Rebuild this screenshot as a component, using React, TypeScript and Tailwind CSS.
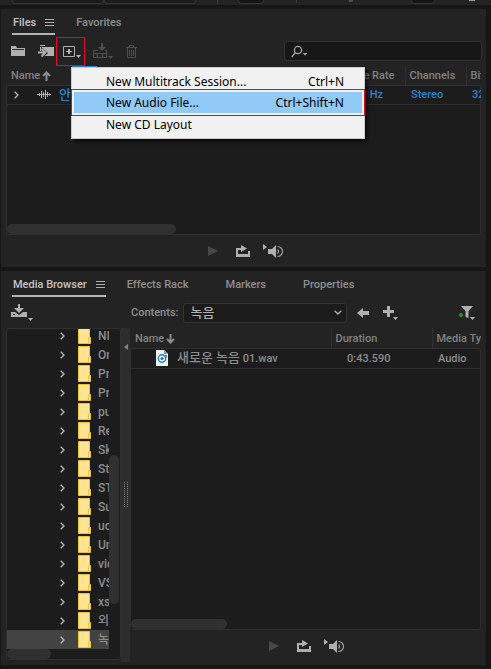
import type { ReactNode } from "react";

const folders = ["NI", "On", "Pre", "Pro", "pub", "Rec", "Sky", "Stu", "STU", "Sup", "ucl", "Uni", "vide", "VST", "xsp", "외부", "녹음"];

function MenuLines() {
  return (
    <svg className="ml-[9px]" width="9" height="8" fill="#b0b0b0" shapeRendering="crispEdges">
      <path d="M0 0h9v1H0zM0 3h9v1H0zM0 6h9v1H0z" />
    </svg>
  );
}

function Chevron() {
  return (
    <svg width="5" height="8" fill="none" stroke="#b8b8b8" strokeWidth="1.3" className="shrink-0" aria-hidden="true">
      <path d="M.7.7 4 4 .7 7.3" />
    </svg>
  );
}

function FolderIcon() {
  return (
    <svg width="13" height="17" aria-hidden="true" className="shrink-0">
      <path d="M.5.5h11v10h1v6H.5z" fill="#ffe491" stroke="#eec13b" />
      <path d="M10.5 16V11h2" fill="none" stroke="#eec13b" />
      <path d="M11.5 12v4" stroke="#fff0ac" />
    </svg>
  );
}

function SortArrow({ down = false }: { down?: boolean }) {
  return (
    <svg width="9" height="10" className="ml-[2px]" fill="none" stroke="#8c8c8c" strokeWidth="2" aria-hidden="true">
      {down ? <path d="M4.5 0v8M1 5l3.500 3.500L8 5" /> : <path d="M4.500 10V2M1 5l3.500-3.500L8 5" />}
    </svg>
  );
}

function Tab({ children, active = false }: { children: ReactNode; active?: boolean }) {
  return (
    <button
      className={
        active
          ? "flex h-[22px] items-center border-b-2 border-[#b4b4b4] px-px text-[#c4c4c4] whitespace-nowrap"
          : "flex h-[22px] items-center pb-[2px] text-[#8f8f8f] whitespace-nowrap"
      }
    >
      {children}
      {active && <MenuLines />}
    </button>
  );
}

function Transport() {
  return (
    <div className="flex items-center">
      <button aria-label="Play" className="mr-[18px]">
        <svg width="10" height="10" fill="#484848">
          <path d="M0 0v10l10-5z" />
        </svg>
      </button>
      <button aria-label="Loop playback" className="mr-[13px]">
        <svg width="14" height="12" fill="#b0b0b0">
          <path d="M0 3h5V0l6 3.500L5 7V5H2v4h10V6h2v6H0z" />
        </svg>
      </button>
      <button aria-label="Auto-play">
        <svg width="21" height="14" fill="#b0b0b0">
          <path d="M0 0v6l4-3zM5 5h4l4-4v13l-4-4H5z" />
          <path d="M14.500 5.500a2.500 2.500 0 0 1 0 4M14.500 2.500a5 5 0 0 1 0 10" fill="none" stroke="#a0a0a0" strokeWidth="1.200" />
        </svg>
      </button>
    </div>
  );
}

function ToolStrip() {
  return (
    <div className="flex h-[5px] shrink-0 items-start bg-[#232323] pl-3">
      <div className="h-1 w-[92px] rounded-b border-x border-b border-[#343434] bg-[#1b1b1b]" />
      <div className="h-1 w-[92px] rounded-b border-x border-b border-[#343434] bg-[#1b1b1b]" />
      <div className="ml-[21px] h-1 w-px bg-[#3a3a3a]" />
      <div className="ml-5 h-1 w-[26px] rounded-b border-x border-b border-[#343434] bg-[#151515]" />
      <div className="ml-8 h-[3px] w-px bg-[#3a3a3a]" />
      <div className="ml-[52px] h-0.5 w-1 bg-[#4c4c4c]" />
      <div className="ml-[58px] h-1 w-6 rounded-b border-x border-b border-[#343434] bg-[#151515]" />
      <div className="ml-[34px] h-px w-[6px] bg-[#9a9a9a]" />
    </div>
  );
}

function NewMenu() {
  return (
    <div
      role="menu"
      className="absolute top-[30px] left-[15px] z-10 flex w-[294px] flex-col border border-[#cccccc] bg-[#f1f1f1] py-[2px] font-['Noto_Sans','Noto_Sans_CJK_KR',sans-serif] text-xs font-normal text-black shadow-[3px_3px_3px_rgba(0,0,0,0.5)]"
    >
      <button role="menuitem" className="flex h-[22px] items-center justify-between pt-[2px] pr-5 pl-[34px]">
        <span>New Multitrack Session...</span>
        <span>Ctrl+N</span>
      </button>
      <button
        role="menuitem"
        className="mx-[2px] mb-px flex h-[21px] items-center justify-between bg-[#91c9f7] pt-[2px] pr-[18px] pl-8 outline-1 outline-offset-2 outline-[#e8062a]"
      >
        <span>New Audio File...</span>
        <span>Ctrl+Shift+N</span>
      </button>
      <button role="menuitem" className="flex h-[22px] items-center pl-[34px]">
        New CD Layout
      </button>
    </div>
  );
}

function FilesPanel() {
  return (
    <section className="flex h-[258px] shrink-0 flex-col bg-[#232323]">
      <div className="flex gap-[21px] pt-[4px] pl-[11px]">
        <Tab active>Files</Tab>
        <Tab>Favorites</Tab>
      </div>
      <div className="flex h-8 items-center pr-1 pl-[10px]">
        <button aria-label="Open file">
          <svg width="15" height="12" fill="#b0b0b0">
            <path d="M0 1h5l1 2h8v1H1v1H0zM0 5h1l1 1h12v5H0z" />
            <path d="M1 4h13v7H1z" />
            <path d="M1 4.500h12" stroke="#2a2a2a" />
          </svg>
        </button>
        <button aria-label="Import file" className="ml-[11px]">
          <svg width="17" height="14">
            <path d="M3 1h5v1H3zM3 3h14v9H3z" fill="#b0b0b0" />
            <path d="M0 7h4V3l7 6-7 6v-3H0z" fill="#232323" />
            <path d="M1 8.500h7M4.500 5l4 3.500-4 4" fill="none" stroke="#b0b0b0" strokeWidth="1.800" />
          </svg>
        </button>
        <div className="relative ml-[2px] h-[29px] w-[29px] border border-[#e8062a]">
          <button aria-label="New file" aria-haspopup="menu" className="flex h-full w-full items-center justify-center">
            <svg width="20" height="17" className="ml-[3px]" fill="#b8b8b8">
              <path d="M1.500 3.500h11v10h-11z" fill="none" stroke="#b0b0b0" />
              <path d="M6 6h2v2h2v1H8v2H6V9H4V8h2z" />
              <path d="M14 12h5l-2.500 3z" />
            </svg>
          </button>
          <span className="absolute top-[28px] left-[15px] h-px w-[25px] bg-[#2d7bd0]" />
          <div className="absolute top-[-1px] left-[-1px]">
            <NewMenu />
          </div>
        </div>
        <button aria-label="Insert into multitrack" className="ml-[8px]">
          <svg width="21" height="17" fill="#4e4e4e">
            <path d="M8 0h2v4h3L9 8 5 4h3z" />
            <path d="M5 7.500H.5v7h13v-7H12M.5 10.500h13M4.500 10.500v4M9.500 10.500v4" fill="none" stroke="#4e4e4e" strokeWidth="1.200" />
            <path d="M15 13h5l-2.500 3z" />
          </svg>
        </button>
        <button aria-label="Delete" className="ml-3">
          <svg width="11" height="13" fill="none" stroke="#4e4e4e">
            <path d="M0 2.500h11M3.500 2V.500h4V2M1.500 3v9.500h8V3M3.500 5v6M5.500 5v6M7.500 5v6" />
          </svg>
        </button>
        <label className="ml-auto flex h-5 w-[42%] items-center rounded-[3px] border border-[#323232] bg-[#171717] pl-[6px]">
          <svg width="17" height="13" fill="none" stroke="#a6a6a6" strokeWidth="1.300" aria-hidden="true">
            <circle cx="7" cy="5" r="3.600" />
            <path d="M4.500 7.500.700 12" />
            <path d="M11.500 8h5L14 10.500z" fill="#a6a6a6" stroke="none" />
          </svg>
          <input aria-label="Search files" className="min-w-0 flex-1 bg-transparent outline-none" />
        </label>
      </div>
      <div className="mt-[-1px] mr-[5px] ml-[5px] grid h-[169px] grid-cols-1 grid-rows-1 overflow-hidden">
        <div className="col-start-1 row-start-1 mt-[19px] rounded-[3px] border border-[#2f2f2f] bg-[#1c1c1c]" />
        <table className="col-start-1 row-start-1 w-full table-fixed self-start border-collapse">
          <colgroup>
            <col />
            <col className="w-[75px]" />
            <col className="w-[61px]" />
            <col className="w-[15px]" />
          </colgroup>
          <thead>
            <tr className="h-5 text-left text-[#828282]">
              <th className="p-0 pl-[5px] font-medium">
                <span className="flex items-center">Name<SortArrow /></span>
              </th>
              <th className="p-0 pr-[10px] text-right font-medium whitespace-nowrap">Sample Rate</th>
              <th className="border-l border-[#303030] p-0 pl-1 font-medium">Channels</th>
              <th className="overflow-hidden border-l border-[#303030] p-0 pl-1 font-medium whitespace-nowrap">Bit</th>
            </tr>
          </thead>
          <tbody>
            <tr className="h-[18px] border-b border-[#2b2b2b] text-[#2f80d0]">
              <td className="p-0 pl-2">
                <span className="flex items-center">
                  <Chevron />
                  <svg width="14" height="9" className="mr-2 ml-[18px]" stroke="#b0b0b0" aria-hidden="true">
                    <path d="M0 4.500h14M2.500 3v3M4.500 1v7M6.500 2v5M8.500 0v9M10.500 2v5M12.500 3.500v2" />
                  </svg>
                  <span className="text-[13px]">안</span>
                </span>
              </td>
              <td className="p-0 pt-px pr-[22px] text-right whitespace-nowrap">Hz</td>
              <td className="p-0 pt-px pl-[6px]">Stereo</td>
              <td className="overflow-hidden p-0 pt-px pl-[6px] whitespace-nowrap">32</td>
            </tr>
          </tbody>
        </table>
        <div className="z-0 col-start-1 row-start-1 mb-px ml-px h-[10px] w-[169px] self-end rounded-full bg-[#303030]" />
      </div>
      <div className="flex flex-1 items-center justify-center pl-[5px]">
        <Transport />
      </div>
    </section>
  );
}

function FolderTree() {
  return (
    <div className="flex h-[332px] w-[115px] shrink-0 flex-col overflow-hidden rounded-[3px] border border-[#2f2f2f] bg-[#1c1c1c]">
      <div className="flex min-h-0 flex-1 overflow-hidden">
        <ul className="mt-[-3px] w-[102px] overflow-hidden text-xs text-[#8c8c8c]">
          {folders.map((name, i) => (
            <li
              key={i}
              className={
                i === folders.length - 1
                  ? "flex h-[19px] items-center overflow-hidden bg-[#434343] pl-[53px] whitespace-nowrap"
                  : "flex h-[19px] items-center overflow-hidden pl-[53px] whitespace-nowrap"
              }
            >
              <Chevron />
              <span className="ml-[13px] flex items-center gap-[7px]">
                <FolderIcon />
                {name}
              </span>
            </li>
          ))}
        </ul>
        <div className="mt-[126px] h-[149px] w-[10px] rounded-full bg-[#303030]" />
      </div>
      <div className="h-[10px] w-11 shrink-0 rounded-full bg-[#303030]" />
    </div>
  );
}

function MediaBrowser() {
  return (
    <section className="flex flex-1 flex-col bg-[#232323]">
      <div className="flex pt-[4px] pl-[11px]">
        <div className="mr-[21px]"><Tab active>Media Browser</Tab></div>
        <div className="flex gap-[37px]">
          <Tab>Effects Rack</Tab>
          <Tab>Markers</Tab>
          <Tab>Properties</Tab>
        </div>
      </div>
      <div className="flex flex-1">
        <div className="flex w-[120px] shrink-0 flex-col pl-[5px]">
          <div className="flex h-[31px] items-center pl-[5px]">
            <button aria-label="Import from drive">
              <svg width="22" height="17" fill="#b0b0b0">
                <path d="M7 0h2v4h4L8 9 3 4h4z" />
                <path d="M0 8h4l4 3 4-3h4v5H0zM2 10v1h2v-1z" fillRule="evenodd" />
                <path d="M17 14h5l-2.500 3z" />
              </svg>
            </button>
          </div>
          <FolderTree />
        </div>
        <div className="mt-[31px] flex h-[334px] w-[9px] shrink-0 flex-col items-center bg-[#2d2d2d]">
          <svg width="4" height="6" className="mt-4" fill="#828282">
            <path d="M4 0v6L0 3z" />
          </svg>
          <div className="mt-[132px] h-[25px] w-[4px] border-x border-dotted border-[#828282]" />
        </div>
        <div className="flex min-w-0 flex-1 flex-col">
          <div className="flex h-[31px] items-center pr-[11px] pl-px text-[#8f8f8f]">
            <label htmlFor="contents" className="pt-px">Contents:</label>
            <div className="ml-[5px] grid w-[164px] grid-cols-1 items-center">
              <select
                id="contents"
                defaultValue="녹음"
                className="col-start-1 row-start-1 h-5 appearance-none rounded-[3px] border border-[#323232] bg-[#1b1b1b] pl-[6px] text-[13px] text-[#b0b0b0]"
              >
                <option>녹음</option>
              </select>
              <svg width="8" height="5" className="pointer-events-none col-start-1 row-start-1 mr-[5px] justify-self-end" fill="none" stroke="#b0b0b0" strokeWidth="1.300">
                <path d="M.700.700 4 4 7.300.700" />
              </svg>
            </div>
            <button aria-label="Back" className="ml-[10px]">
              <svg width="12" height="10" fill="#b0b0b0">
                <path d="M0 5l6-5v3h6v4H6v3z" />
              </svg>
            </button>
            <button aria-label="Add shortcut" className="ml-[14px]">
              <svg width="15" height="15" fill="#b0b0b0">
                <path d="M4 1h3v4h4v3H7v4H4V8H0V5h4zM10 12h5l-2.500 3z" />
              </svg>
            </button>
            <button aria-label="Filter" className="ml-auto">
              <svg width="16" height="15" fill="#b0b0b0">
                <path d="M2 1h12L9.500 6v7l-3-1V6zM11 12h5l-2.500 3z" />
                <circle cx="2" cy="10" r="2" fill="#1c9a1c" />
              </svg>
            </button>
          </div>
          <div className="mr-[5px] grid h-[302px] grid-cols-1 grid-rows-1 overflow-hidden">
            <div className="col-start-1 row-start-1 mt-5 rounded-[3px] border border-[#2f2f2f] bg-[#1c1c1c]" />
            <table className="col-start-1 row-start-1 w-full table-fixed self-start border-collapse">
              <colgroup>
                <col />
                <col className="w-[101px]" />
                <col className="w-[49px]" />
              </colgroup>
              <thead>
                <tr className="h-[21px] text-left text-[#828282]">
                  <th className="p-0 pl-[5px] font-medium">
                    <span className="flex items-center">Name<SortArrow down /></span>
                  </th>
                  <th className="border-l border-[#303030] p-0 pl-1 font-medium">Duration</th>
                  <th className="overflow-hidden border-l border-[#303030] p-0 pl-1 font-medium whitespace-nowrap">Media Type</th>
                </tr>
              </thead>
              <tbody>
                <tr className="h-[19px] border-b border-[#2b2b2b] text-[#8c8c8c]">
                  <td className="p-0 pl-[26px]">
                    <span className="flex items-center gap-[9px]">
                      <svg width="12" height="16" aria-hidden="true">
                        <path d="M0 0h8l4 4v12H0z" fill="#f2f2f2" />
                        <path d="M8 0v4h4z" fill="#9a9a9a" />
                        <circle cx="6" cy="8.500" r="3.700" fill="none" stroke="#1683d8" strokeWidth="1.400" />
                        <circle cx="6" cy="8.500" r="1.600" fill="#1683d8" />
                        <path d="M8 5.500h2.500v2" fill="none" stroke="#1683d8" />
                      </svg>
                      <span>
                        <span className="text-[13px]">새로운 녹음</span> 01.wav
                      </span>
                    </span>
                  </td>
                  <td className="p-0 pt-px pl-4">0:43.590</td>
                  <td className="p-0 pt-px pl-[6px]">Audio</td>
                </tr>
              </tbody>
            </table>
            <div className="z-0 col-start-1 row-start-1 mb-px ml-px h-[10px] w-24 self-end rounded-full bg-[#303030]" />
          </div>
          <div className="flex flex-1 items-center justify-center pr-0.5 pb-1">
            <Transport />
          </div>
        </div>
      </div>
    </section>
  );
}

export default function App() {
  return (
    <div className="flex h-screen flex-col overflow-hidden bg-[#161616] font-[Roboto,'Noto_Sans_CJK_KR',sans-serif] text-[11px] leading-4 font-medium">
      <ToolStrip />
      <main className="flex min-h-0 flex-1 flex-col gap-1 pt-1 pr-[5px] pb-1 pl-px">
        <FilesPanel />
        <MediaBrowser />
      </main>
    </div>
  );
}
